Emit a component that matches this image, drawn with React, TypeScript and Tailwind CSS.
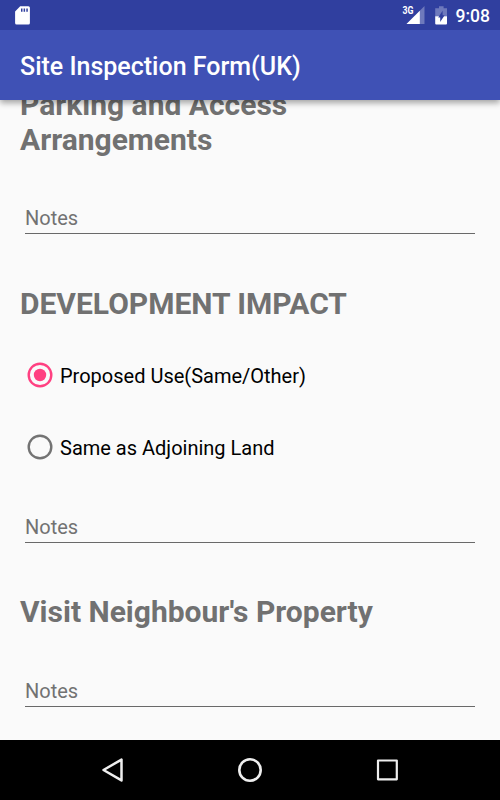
import type { ReactNode } from 'react';

function StatusBar() {
  return (
    <div className="flex h-[30px] items-center justify-between bg-[#303f9f] pl-[15px] pr-[10px]">
      <svg width="15" height="19" viewBox="0 0 15 19">
        <path
          fillRule="evenodd"
          fill="#fff"
          d="M5.2 0.3H13.4A1.5 1.5 0 0 1 14.9 1.8V17A1.5 1.5 0 0 1 13.4 18.5H1.6A1.5 1.5 0 0 1 0.1 17V5.6ZM6 2.4V5.8H7.5V2.4ZM8.6 2.4V5.8H10.1V2.4ZM11.3 2.4V5.8H12.8V2.4Z"
        />
      </svg>
      <div className="flex h-full items-center">
        <svg width="24" height="30" viewBox="0 0 24 30">
          <text x="0.5" y="14.4" fill="#fff" fontSize="10" fontWeight="700" textLength="11" lengthAdjust="spacingAndGlyphs">
            3G
          </text>
          <path d="M22.5 6V24H4.5Z" fill="#fff" fillOpacity="0.3" />
          <path d="M17.8 10.7V24H4.5Z" fill="#fff" />
        </svg>
        <svg className="ml-[9px]" width="13" height="19" viewBox="0 0 13 19">
          <path d="M4 0.3H8.6V2.2H12V10.3H0.2V2.2H4Z" fill="#fff" fillOpacity="0.3" />
          <path d="M0.2 10.3H12V17.5A1 1 0 0 1 11 18.5H1.2A1 1 0 0 1 0.2 17.5Z" fill="#fff" />
          <path d="M7.6 4.8L3.2 11.5H5.2V16L9.6 9.3H7.6Z" fill="#303f9f" />
        </svg>
        <span className="ml-[8px] mt-[2px] text-[17.5px] font-medium leading-[28px] text-white">9:08</span>
      </div>
    </div>
  );
}

function SectionTitle({ children }: { children: ReactNode }) {
  return <h2 className="w-[360px] text-[30px] font-bold leading-[35px] text-[#717171]">{children}</h2>;
}

function NotesField() {
  return (
    <div className="mx-[5px] h-[28px] border-b border-[#696969] pt-px text-[20px] leading-[23px] text-[#727272]">
      Notes
    </div>
  );
}

interface RadioRowProps {
  label: string;
  checked?: boolean;
}

function RadioRow({ label, checked = false }: RadioRowProps) {
  const color = checked ? '#ff4081' : '#737373';

  return (
    <div className="flex h-[40px] items-center pl-[7px] text-[20px] text-black">
      <svg width="26" height="26" viewBox="0 0 26 26">
        <circle cx="13" cy="13" r="11.3" fill="none" stroke={color} strokeWidth="2.4" />
        {checked && <circle cx="13" cy="13" r="6.2" fill={color} />}
      </svg>
      <span className="ml-[7px] mt-[2px] leading-[24px]">{label}</span>
    </div>
  );
}

function NavigationBar() {
  return (
    <div className="flex h-[60px] items-center justify-between bg-black px-[100px]">
      <svg width="25" height="26" viewBox="0 0 25 26" fill="none" stroke="#eee" strokeWidth="2.5" strokeLinejoin="round">
        <path d="M21.5 2.6V23.4L3.5 13Z" />
      </svg>
      <svg width="26" height="26" viewBox="0 0 26 26" fill="none" stroke="#eee" strokeWidth="2.6">
        <circle cx="13" cy="13" r="10.7" />
      </svg>
      <svg width="25" height="26" viewBox="0 0 25 26" fill="none" stroke="#eee" strokeWidth="2.2" strokeLinejoin="round">
        <path d="M3 3.5H21.8V22.3H3Z" />
      </svg>
    </div>
  );
}

export default function App() {
  return (
    <div className="flex h-[800px] w-[500px] flex-col overflow-hidden bg-[#fafafa] font-['Roboto',sans-serif]">
      <header className="relative z-10 shadow-[0_3px_6px_rgba(0,0,0,0.35)]">
        <StatusBar />
        <div className="flex h-[70px] items-center bg-[#3f51b5] px-[20px]">
          <h1 className="mt-[3px] text-[25px] font-medium leading-[30px] text-white">Site Inspection Form(UK)</h1>
        </div>
      </header>

      <main className="min-h-0 flex-1 overflow-hidden">
        <div className="-mt-[13px] flex flex-col px-[20px]">
          <SectionTitle>Parking and Access Arrangements</SectionTitle>
          <div className="mt-[49px]">
            <NotesField />
          </div>
          <div className="mt-[52px]">
            <SectionTitle>DEVELOPMENT IMPACT</SectionTitle>
          </div>
          <div className="mt-[34px] flex flex-col gap-[32px]">
            <RadioRow label="Proposed Use(Same/Other)" checked />
            <RadioRow label="Same as Adjoining Land" />
          </div>
          <div className="mt-[48px]">
            <NotesField />
          </div>
          <div className="mt-[51px]">
            <SectionTitle>Visit Neighbour's Property</SectionTitle>
          </div>
          <div className="mt-[50px]">
            <NotesField />
          </div>
        </div>
      </main>

      <NavigationBar />
    </div>
  );
}
